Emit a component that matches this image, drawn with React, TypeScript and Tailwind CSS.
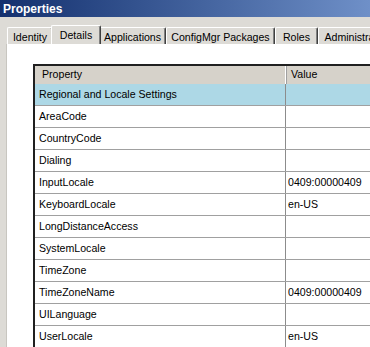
import React from "react";

const tabs = [
  { label: "Identity", w: 46 },
  { label: "Details", w: 46, selected: true },
  { label: "Applications", w: 67 },
  { label: "ConfigMgr Packages", w: 109 },
  { label: "Roles", w: 43 },
  { label: "Administrative Users", w: 110 },
];

const rows: [string, string][] = [
  ["AreaCode", ""],
  ["CountryCode", ""],
  ["Dialing", ""],
  ["InputLocale", "0409:00000409"],
  ["KeyboardLocale", "en-US"],
  ["LongDistanceAccess", ""],
  ["SystemLocale", ""],
  ["TimeZone", ""],
  ["TimeZoneName", "0409:00000409"],
  ["UILanguage", ""],
  ["UserLocale", "en-US"],
];

export default function App() {
  return (
    <div
      className="w-[370px] h-[347px] overflow-hidden bg-[#dddbd6] text-[10.6px] text-black flex flex-col"
      style={{ fontFamily: '"Liberation Sans", Arial, sans-serif' }}
    >
      <div className="h-[17px] shrink-0 bg-gradient-to-r from-[#14306e] to-[#6f90c8] flex items-center pl-[3px]">
        <span className="text-white font-bold text-[12px] leading-none">Properties</span>
      </div>
      <div className="h-[27px] shrink-0 flex items-end pl-[7px] overflow-hidden whitespace-nowrap">
        {tabs.map((t) =>
          t.selected ? (
            <div
              key={t.label}
              className="relative z-10 -mx-[2px] h-[19px] shrink-0 flex items-start justify-center pt-[2px] border-t border-l border-white border-r border-r-[#404040] rounded-tl-[2px] rounded-tr-[2px] bg-[#dddbd6] shadow-[inset_-1px_0_0_#808080] text-[10.6px]"
              style={{ width: t.w + 4 }}
            >
              {t.label}
            </div>
          ) : (
            <div
              key={t.label}
              className="h-[17px] shrink-0 flex items-start justify-center pt-[2px] border-t border-l border-white border-r border-r-[#404040] rounded-tl-[2px] rounded-tr-[2px] shadow-[inset_-1px_0_0_#808080] text-[10.6px]"
              style={{ width: t.w }}
            >
              {t.label}
            </div>
          )
        )}
      </div>
      <div className="flex-1 ml-[7px] bg-white border-l border-t border-white shadow-[-1px_0_0_#c8c6c0] pl-[25px] pt-[19px] overflow-hidden">
        <div className="border-l-2 border-t-2 border-l-[#202020] border-t-[#202020] w-[400px]">
          <div className="flex h-[18px] bg-[#d6d2ca]">
            <div className="w-[251px] pl-[7px] flex items-center border-r border-[#ffffff] shadow-[1px_0_0_#a0a0a0]">
              Property
            </div>
            <div className="flex-1 pl-[5px] flex items-center">Value</div>
          </div>
          <div className="flex h-[22px] bg-[#add8e6] border-b border-[#a0a0a0]">
            <div className="w-[251px] pl-[4px] flex items-center border-r border-[#8c8c8c]">
              Regional and Locale Settings
            </div>
            <div className="flex-1" />
          </div>
          {rows.map(([k, v]) => (
            <div key={k} className="flex h-[22px] border-b border-[#a0a0a0]">
              <div className="w-[251px] pl-[4px] flex items-center border-r border-[#8c8c8c]">{k}</div>
              <div className="flex-1 pl-[2px] flex items-center">{v}</div>
            </div>
          ))}
        </div>
      </div>
    </div>
  );
}
